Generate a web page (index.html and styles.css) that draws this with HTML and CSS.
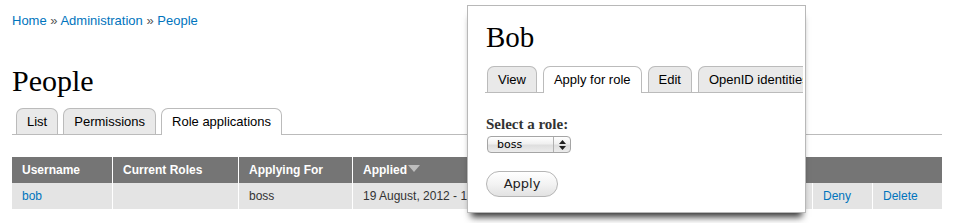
FILE: index.html
```html
<!DOCTYPE html>
<html>
<head>
<meta charset="utf-8">
<link rel="stylesheet" href="styles.css">
</head>
<body>
<div class="page">
  <div class="breadcrumb"><a href="#">Home</a> » <a href="#">Administration</a> » <a href="#">People</a></div>
  <h1 class="title">People</h1>
  <ul class="tabs main">
    <li><a href="#">List</a></li>
    <li><a href="#">Permissions</a></li>
    <li class="active"><a href="#">Role applications</a></li>
  </ul>
  <table class="grid">
    <colgroup>
      <col class="c1"><col class="c2"><col class="c3"><col class="c4"><col class="c5"><col class="c6"><col class="c7">
    </colgroup>
    <thead>
      <tr>
        <th>Username</th>
        <th>Current Roles</th>
        <th>Applying For</th>
        <th>Applied<svg class="sort" width="12" height="7" viewBox="0 0 12 7"><path d="M0 0H12L6 7Z" fill="#bdbdbd"/></svg></th>
        <th colspan="3">Operations</th>
      </tr>
    </thead>
    <tbody>
      <tr>
        <td><a href="#">bob</a></td>
        <td></td>
        <td>boss</td>
        <td>19 August, 2012 - 12:04</td>
        <td><a href="#">Approve</a></td>
        <td><a href="#">Deny</a></td>
        <td><a href="#">Delete</a></td>
      </tr>
    </tbody>
  </table>
</div>

<div class="dialog">
  <div class="dialog-inner">
    <h1 class="dialog-title">Bob</h1>
    <ul class="tabs small">
      <li><a href="#">View</a></li>
      <li class="active"><a href="#">Apply for role</a></li>
      <li><a href="#">Edit</a></li>
      <li><a href="#">OpenID identities</a></li>
    </ul>
    <div class="label">Select a role:</div>
    <div class="select">
      <span class="select-text">boss</span>
      <span class="select-arrows"><svg width="7" height="10" viewBox="0 0 7 10"><path d="M3.5 0L7 4H0Z M0 6H7L3.5 10Z" fill="#222"/></svg></span>
    </div>
    <div class="button">Apply</div>
  </div>
</div>
</body>
</html>
```
FILE: styles.css
```css
html, body {
  margin: 0;
  padding: 0;
  background: #fff;
}
body {
  font-family: "Liberation Sans", Arial, sans-serif;
  font-size: 13px;
  color: #333;
  width: 957px;
  height: 223px;
  overflow: hidden;
  position: relative;
}
a {
  color: #0074bd;
  text-decoration: none;
}
.page {
  padding: 12px 15px 0 12px;
}
.breadcrumb {
  line-height: 18px;
  color: #555;
}
.title {
  margin: 33px 0 0;
  font-family: "Liberation Serif", "Times New Roman", serif;
  font-weight: normal;
  font-size: 30px;
  line-height: 36px;
  color: #000;
}
.tabs {
  list-style: none;
  margin: 9px 0 0;
  padding: 0 0 0 4px;
  display: flex;
  flex-wrap: nowrap;
  border-bottom: 1px solid #bbb;
}
.tabs li {
  flex-shrink: 0;
  margin-right: 6px;
}
.tabs.main li {
  margin-right: 5px;
}
.tabs a {
  display: block;
  padding: 0 10px;
  line-height: 25px;
  border: 1px solid #bbb;
  border-bottom: 0;
  border-radius: 7px 7px 0 0;
  background: #e9e9e9;
  color: #000;
  white-space: nowrap;
}
.tabs li.active a {
  background: #fff;
  padding-bottom: 1px;
  margin-bottom: -1px;
}
.grid {
  margin-top: 22px;
  width: 930px;
  border-collapse: separate;
  border-spacing: 0;
  table-layout: fixed;
  font-size: 12px;
}
.c1 { width: 101px; }
.c2 { width: 126px; }
.c3 { width: 114px; }
.c4 { width: 250px; }
.c5 { width: 210px; }
.c6 { width: 60px; }
.c7 { width: 69px; }
.grid th, .grid td {
  height: 26px;
  padding: 0 0 0 10px;
  text-align: left;
  border-right: 1px solid #fff;
  white-space: nowrap;
  overflow: hidden;
  box-sizing: border-box;
}
.grid th:last-child, .grid td:last-child {
  border-right: 0;
}
.grid th {
  background: #757575;
  color: #fff;
  font-weight: bold;
}
.grid td {
  background: #e4e4e4;
  color: #333;
}
.sort {
  margin-left: 1px;
  vertical-align: 2px;
}
.dialog {
  position: absolute;
  left: 467px;
  top: 5px;
  width: 337px;
  height: 206px;
  border: 1px solid #b8b8b8;
  background: #fff;
  box-shadow: 0 8px 7px -4px rgba(0, 0, 0, 0.8);
}
.dialog-inner {
  margin-right: 2px;
  padding: 13px 0 0 18px;
  overflow: hidden;
  height: 193px;
}
.dialog-title {
  margin: 0;
  font-family: "Liberation Serif", "Times New Roman", serif;
  font-weight: normal;
  font-size: 29px;
  line-height: 36px;
  color: #000;
}
.tabs.small {
  margin: 11px 0 0 -1px;
  padding-left: 2px;
}
.label {
  margin-top: 22px;
  font-family: "Liberation Serif", "Times New Roman", serif;
  font-weight: bold;
  font-size: 15px;
  line-height: 18px;
  color: #333;
}
.select {
  margin: 3px 0 0 1px;
  width: 84px;
  height: 17px;
  box-sizing: border-box;
  border: 1px solid #a5a5a5;
  border-radius: 4px;
  background: linear-gradient(#ffffff, #f0f0f0 45%, #dedede 55%, #ececec);
  display: flex;
  align-items: center;
}
.select-text {
  flex: 1;
  padding-left: 9px;
  font-family: "DejaVu Sans", sans-serif;
  font-size: 11px;
  color: #000;
}
.select-arrows {
  width: 16px;
  height: 15px;
  border-left: 1px solid #b0b0b0;
  display: flex;
  align-items: center;
  justify-content: center;
}
.button {
  margin-top: 18px;
  width: 72px;
  height: 26px;
  box-sizing: border-box;
  border: 1px solid #b5b5b5;
  border-radius: 13px;
  background: linear-gradient(#ffffff, #f3f3f3 50%, #e2e2e2);
  font-family: "DejaVu Sans", sans-serif;
  font-size: 13px;
  line-height: 24px;
  text-align: center;
  color: #222;
}
```
